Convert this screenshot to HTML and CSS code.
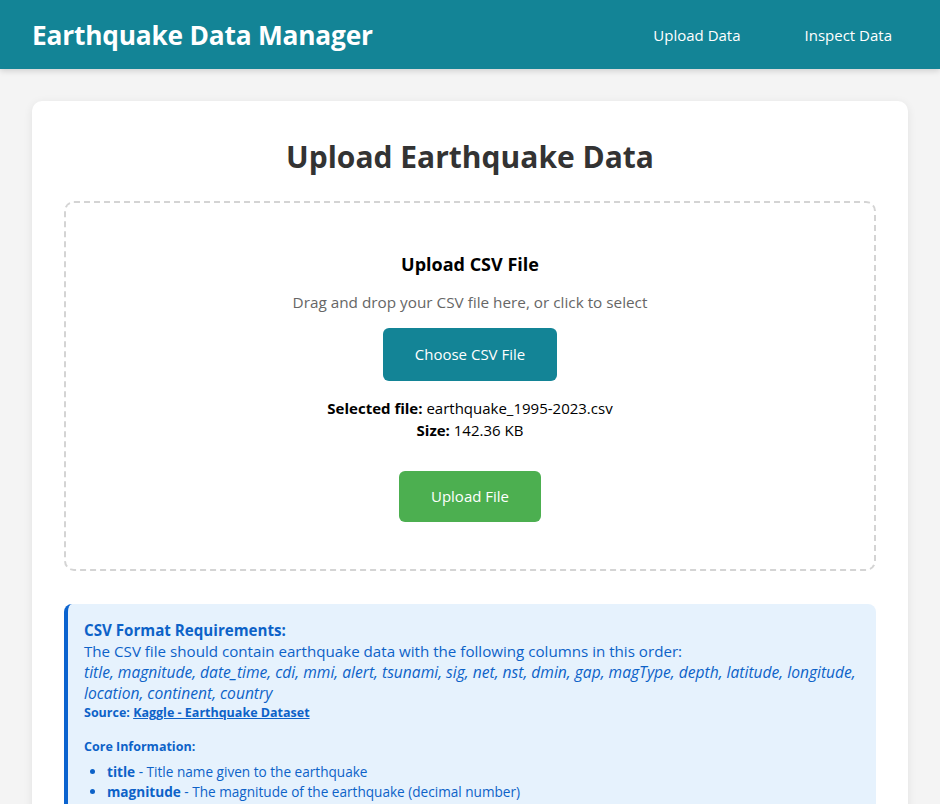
FILE: index.html
```html
<!DOCTYPE html>
<html lang="en">
<head>
<meta charset="utf-8">
<title>Earthquake Data Manager</title>
<link rel="stylesheet" href="styles.css">
</head>
<body>
<header class="topbar">
  <h1 class="brand">Earthquake Data Manager</h1>
  <nav class="nav">
    <a class="nav-link" href="#">Upload Data</a>
    <a class="nav-link" href="#">Inspect Data</a>
  </nav>
</header>
<main class="main">
  <section class="card">
    <h2 class="page-title">Upload Earthquake Data</h2>
    <div class="dropzone">
      <h3 class="dz-title">Upload CSV File</h3>
      <p class="dz-hint">Drag and drop your CSV file here, or click to select</p>
      <button class="btn btn-choose">Choose CSV File</button>
      <div class="file-info">
        <div><strong>Selected file:</strong> earthquake_1995-2023.csv</div>
        <div><strong>Size:</strong> 142.36 KB</div>
      </div>
      <button class="btn btn-upload">Upload File</button>
    </div>
    <div class="info">
      <div class="info-head"><strong>CSV Format Requirements:</strong></div>
      <div class="info-text">The CSV file should contain earthquake data with the following columns in this order:</div>
      <div class="info-cols"><em>title, magnitude, date_time, cdi, mmi, alert, tsunami, sig, net, nst, dmin, gap, magType, depth, latitude, longitude, location, continent, country</em></div>
      <div class="info-source"><strong>Source: <a href="#" class="info-link">Kaggle - Earthquake Dataset</a></strong></div>
      <div class="info-sub">Core Information:</div>
      <ul class="info-list">
        <li><strong>title</strong> - Title name given to the earthquake</li>
        <li><strong>magnitude</strong> - The magnitude of the earthquake (decimal number)</li>
      </ul>
    </div>
  </section>
</main>
</body>
</html>
```
FILE: styles.css
```css
* { box-sizing: border-box; }
html, body { margin: 0; padding: 0; }
body {
  font-family: "Open Sans", "Noto Sans", sans-serif;
  background: #f4f4f4;
  color: #333;
  font-size: 16px;
}
.topbar {
  height: 69px;
  background: #138496;
  color: #fff;
  display: flex;
  align-items: center;
  justify-content: space-between;
  padding: 0 32px;
  box-shadow: 0 2px 6px rgba(0,0,0,0.15);
}
.brand {
  margin: 0;
  font-size: 26.3px;
  font-weight: 700;
  letter-spacing: -0.2px;
}
.nav { display: flex; gap: 32px; }
.nav-link {
  color: #fff;
  text-decoration: none;
  font-size: 15px;
  padding: 8px 16px;
}
.main { padding: 32px; }
.card {
  background: #fff;
  border-radius: 10px;
  box-shadow: 0 2px 10px rgba(0,0,0,0.08);
  padding: 32px;
}
.page-title {
  margin: 0 0 20px;
  text-align: center;
  font-size: 30px;
  line-height: 48px;
  font-weight: 700;
  color: #333;
}
.dropzone {
  border: 2px dashed #d4d4d4;
  border-radius: 10px;
  padding: 48px 32px 47px;
  display: flex;
  flex-direction: column;
  align-items: center;
  text-align: center;
}
.dz-title {
  margin: 0;
  font-size: 18px;
  line-height: 26px;
  color: #000;
  font-weight: 700;
}
.dz-hint {
  margin: 13px 0 14px;
  line-height: 24px;
  color: #666;
  font-size: 15.3px;
}
.btn {
  border: none;
  color: #fff;
  font-family: inherit;
  font-size: 15px;
  line-height: 21px;
  border-radius: 6px;
  cursor: pointer;
}
.btn-choose {
  background: #138496;
  padding: 16px 32px;
}
.file-info {
  margin: 16px 0 30px;
  font-size: 15px;
  line-height: 22px;
  color: #000;
}
.btn-upload {
  background: #4caf50;
  padding: 15px 32px;
}
.info {
  margin-top: 33px;
  background: #e6f2fd;
  border-left: 4px solid #0b63cf;
  border-radius: 8px;
  padding: 16px 16px 16px 16px;
  color: #0d62c8;
  font-size: 15.15px;
  line-height: 21px;
}
.info-cols { font-size: 15.6px; }
.info-source { font-size: 12.5px; line-height: 18px; }
.info-link { color: #0d62c8; }
.info-sub {
  margin-top: 16px;
  font-size: 12.5px;
  font-weight: 700;
  line-height: 18px;
}
.info-list {
  margin: 6px 0 0;
  padding-left: 23px;
  font-size: 13.6px;
  line-height: 20px;
}
```
